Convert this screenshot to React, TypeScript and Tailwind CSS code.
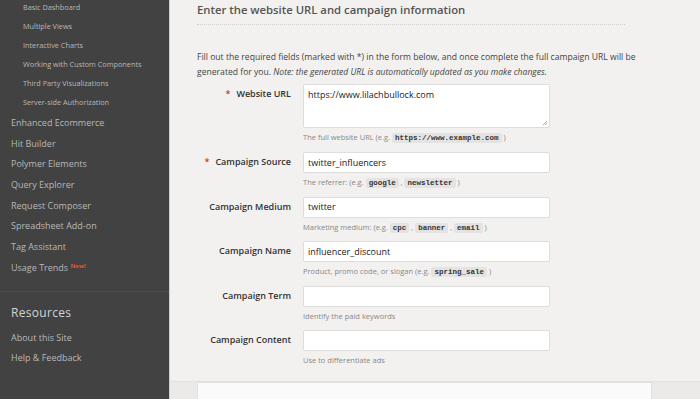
import React from 'react'

const subItems = [
  'Basic Dashboard',
  'Multiple Views',
  'Interactive Charts',
  'Working with Custom Components',
  'Third Party Visualizations',
  'Server-side Authorization',
]

const mainItems = [
  'Enhanced Ecommerce',
  'Hit Builder',
  'Polymer Elements',
  'Query Explorer',
  'Request Composer',
  'Spreadsheet Add-on',
  'Tag Assistant',
]

function Code({ children }: { children: React.ReactNode }) {
  return (
    <code className="rounded-[2px] bg-[#e4e3e1] px-[3px] py-[1px] font-['Liberation_Mono',monospace] text-[7.5px] font-bold text-[#333]">
      {children}
    </code>
  )
}

type Field = {
  label: string
  required?: boolean
  value: string
  textarea?: boolean
  hint: React.ReactNode
}

const fields: Field[] = [
  {
    label: 'Website URL',
    required: true,
    value: 'https://www.lilachbullock.com',
    textarea: true,
    hint: (
      <>
        The full website URL (e.g. <Code>https://www.example.com</Code> )
      </>
    ),
  },
  {
    label: 'Campaign Source',
    required: true,
    value: 'twitter_influencers',
    hint: (
      <>
        The referrer: (e.g. <Code>google</Code> , <Code>newsletter</Code> )
      </>
    ),
  },
  {
    label: 'Campaign Medium',
    value: 'twitter',
    hint: (
      <>
        Marketing medium: (e.g. <Code>cpc</Code> , <Code>banner</Code> , <Code>email</Code> )
      </>
    ),
  },
  {
    label: 'Campaign Name',
    value: 'influencer_discount',
    hint: (
      <>
        Product, promo code, or slogan (e.g. <Code>spring_sale</Code> )
      </>
    ),
  },
  {
    label: 'Campaign Term',
    value: '',
    hint: 'Identify the paid keywords',
  },
  {
    label: 'Campaign Content',
    value: '',
    hint: 'Use to differentiate ads',
  },
]

export default function App() {
  return (
    <div className="flex h-[399px] w-[700px] overflow-hidden bg-[#f2f1ef] font-['Open_Sans',sans-serif]">
      {/* Sidebar */}
      <aside className="flex w-[170px] shrink-0 flex-col border-r border-[#cfcecc] bg-[#424242] text-[#b8b8b8]">
        <ul className="-mt-[2px]">
          {subItems.map((item) => (
            <li key={item} className="h-[19px] pl-[23px] text-[7.3px] leading-[19px]">
              {item}
            </li>
          ))}
        </ul>
        <ul className="mt-[1px]">
          {mainItems.map((item) => (
            <li key={item} className="h-[20.67px] pl-[11px] text-[9px] leading-[20.67px]">
              {item}
            </li>
          ))}
          <li className="h-[20.67px] pl-[11px] text-[9px] leading-[20.67px]">
            Usage Trends{' '}
            <sup className="text-[6px] font-bold text-[#e0552f]">New!</sup>
          </li>
        </ul>
        <div className="mt-[13px] border-t border-dotted border-[#555]" />
        <div className="pl-[11px] pt-[13px]">
          <h3 className="text-[12px] leading-[16px] tracking-[0.3px] text-[#d4d4d4]">Resources</h3>
          <ul className="mt-[7px] text-[9px]">
            <li className="h-[20px] leading-[20px]">About this Site</li>
            <li className="h-[20px] leading-[20px]">Help &amp; Feedback</li>
          </ul>
        </div>
      </aside>

      {/* Main */}
      <main className="flex flex-1 flex-col">
        <div className="w-[482px] pl-[27px]">
          <h2 className="mr-[27px] border-b border-dotted border-[#d0cfcc] pt-[1px] pb-[5px] text-[11.3px] font-semibold leading-[18px] text-[#555]">
            Enter the website URL and campaign information
          </h2>
          <p className="mt-[25px] text-[8.6px] leading-[15px] text-[#444]">
            Fill out the required fields (marked with *) in the form below, and once complete the full campaign URL will be
            generated for you. <em>Note: the generated URL is automatically updated as you make changes.</em>
          </p>

          <form className="mt-[4px] flex flex-col">
            {fields.map((f) => (
              <div key={f.label} className="flex h-[44.5px] first:h-[68px]">
                <label className="w-[94px] shrink-0 pt-[3px] text-right text-[9px] font-semibold leading-[14px] text-[#333]">
                  {f.required && <span className="mr-[6px] text-[#c33]">*</span>}
                  {f.label}
                </label>
                <div className="ml-[12px] flex w-[247px] flex-col">
                  {f.textarea ? (
                    <div className="relative h-[44px] rounded-[2px] border border-[#ddd] bg-white px-[4px] pt-[3px] text-[9px] text-[#222]">
                      {f.value}
                      <svg className="absolute right-[1px] bottom-[1px]" width="6" height="6" viewBox="0 0 6 6">
                        <path d="M5 1 L1 5 M5 3 L3 5" stroke="#999" strokeWidth="0.8" />
                      </svg>
                    </div>
                  ) : (
                    <div className="flex h-[21px] items-center rounded-[2px] border border-[#ddd] bg-white px-[4px] text-[9px] text-[#222]">
                      {f.value}
                    </div>
                  )}
                  <div className="mt-[2px] text-[7.5px] leading-[14px] text-[#888]">{f.hint}</div>
                </div>
              </div>
            ))}
          </form>
        </div>

        <div className="mt-auto h-[18px] border-t border-[#e2e1df] bg-[#ebeae8] pl-[27px] pr-[48px]">
          <div className="h-full rounded-t-[2px] border border-b-0 border-[#e2e1df] bg-[#fafafa]" />
        </div>
      </main>
    </div>
  )
}
